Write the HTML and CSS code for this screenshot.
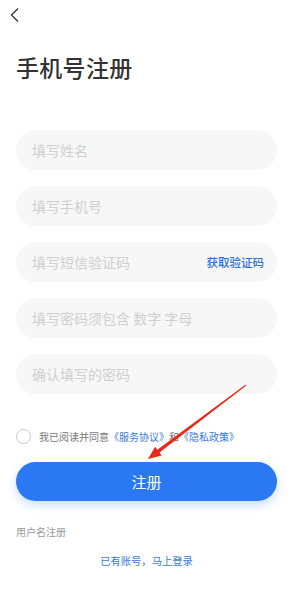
FILE: index.html
```html
<!DOCTYPE html>
<html lang="zh-CN">
<head>
<meta charset="utf-8">
<title>手机号注册</title>
<link rel="stylesheet" href="styles.css">
</head>
<body>
<div class="page">
  <div class="topbar">
    <svg class="back" width="10" height="16" viewBox="0 0 10 16"><path d="M8 1.5 L1.5 8 L8 14.5" fill="none" stroke="#333" stroke-width="1.3"/></svg>
  </div>
  <h1 class="title">手机号注册</h1>
  <div class="form">
    <div class="field"><span class="ph">填写姓名</span></div>
    <div class="field"><span class="ph">填写手机号</span></div>
    <div class="field"><span class="ph">填写短信验证码</span><span class="code">获取验证码</span></div>
    <div class="field"><span class="ph">填写密码须包含 数字 字母</span></div>
    <div class="field"><span class="ph">确认填写的密码</span></div>
  </div>
  <div class="agree">
    <span class="radio"></span>
    <span class="agree-text">我已阅读并同意</span>
    <span class="link">《服务协议》</span><span class="agree-text">和</span><span class="link">《隐私政策》</span>
  </div>
  <div class="btn">注册</div>
  <div class="alt">用户名注册</div>
  <div class="login">已有账号，马上登录</div>
  <svg class="arrow" width="293" height="611" viewBox="0 0 293 611">
    <polygon points="245.7,384.6 246.3,385.4 159.5,452.6 161.7,455.6 148,459 155.1,446.8 157.3,449.8" fill="#e8281e"/>
  </svg>
</div>
</body>
</html>
```

FILE: styles.css
```css
* { box-sizing: border-box; }
html, body { margin: 0; padding: 0; background: #fff; }
body {
  font-family: "Noto Sans CJK SC", "Noto Sans", sans-serif;
  width: 293px;
  height: 611px;
  overflow: hidden;
}
.page {
  position: relative;
  padding: 0 16px;
  height: 611px;
}
.topbar {
  height: 30px;
  padding-top: 7px;
  margin-left: -6px;
}
.back { display: block; }
.title {
  margin: 22px 0 0;
  font-size: 23px;
  line-height: 30px;
  font-weight: 500;
  color: #333;
  letter-spacing: 0.3px;
}
.form {
  margin-top: 48px;
  display: flex;
  flex-direction: column;
  gap: 16px;
}
.field {
  height: 40px;
  border-radius: 20px;
  background: #f7f7f7;
  display: flex;
  align-items: center;
  justify-content: space-between;
  padding: 0 13px 0 16px;
}
.ph {
  font-size: 14px;
  color: #cfcfcf;
}
.code {
  font-size: 11.5px;
  color: #2b72d9;
  font-weight: 500;
}
.agree {
  margin-top: 34px;
  display: flex;
  align-items: center;
  height: 16px;
  font-size: 10px;
}
.radio {
  width: 15px;
  height: 15px;
  border: 1.5px solid #c8c8c8;
  border-radius: 50%;
  margin-right: 8px;
}
.agree-text { color: #777; }
.link { color: #3a7ad8; }
.btn {
  margin-top: 18px;
  height: 39px;
  border-radius: 20px;
  background: #2a79f2;
  color: #fff;
  font-size: 15px;
  display: flex;
  align-items: center;
  justify-content: center;
  box-shadow: 0 4px 10px rgba(42, 121, 242, 0.25);
}
.alt {
  margin-top: 24px;
  font-size: 10px;
  color: #999;
  line-height: 14px;
}
.login {
  margin-top: 15px;
  text-align: center;
  font-size: 10.3px;
  color: #3a7ad8;
  line-height: 14px;
}
.arrow {
  position: absolute;
  left: 0;
  top: 0;
  pointer-events: none;
}
```
